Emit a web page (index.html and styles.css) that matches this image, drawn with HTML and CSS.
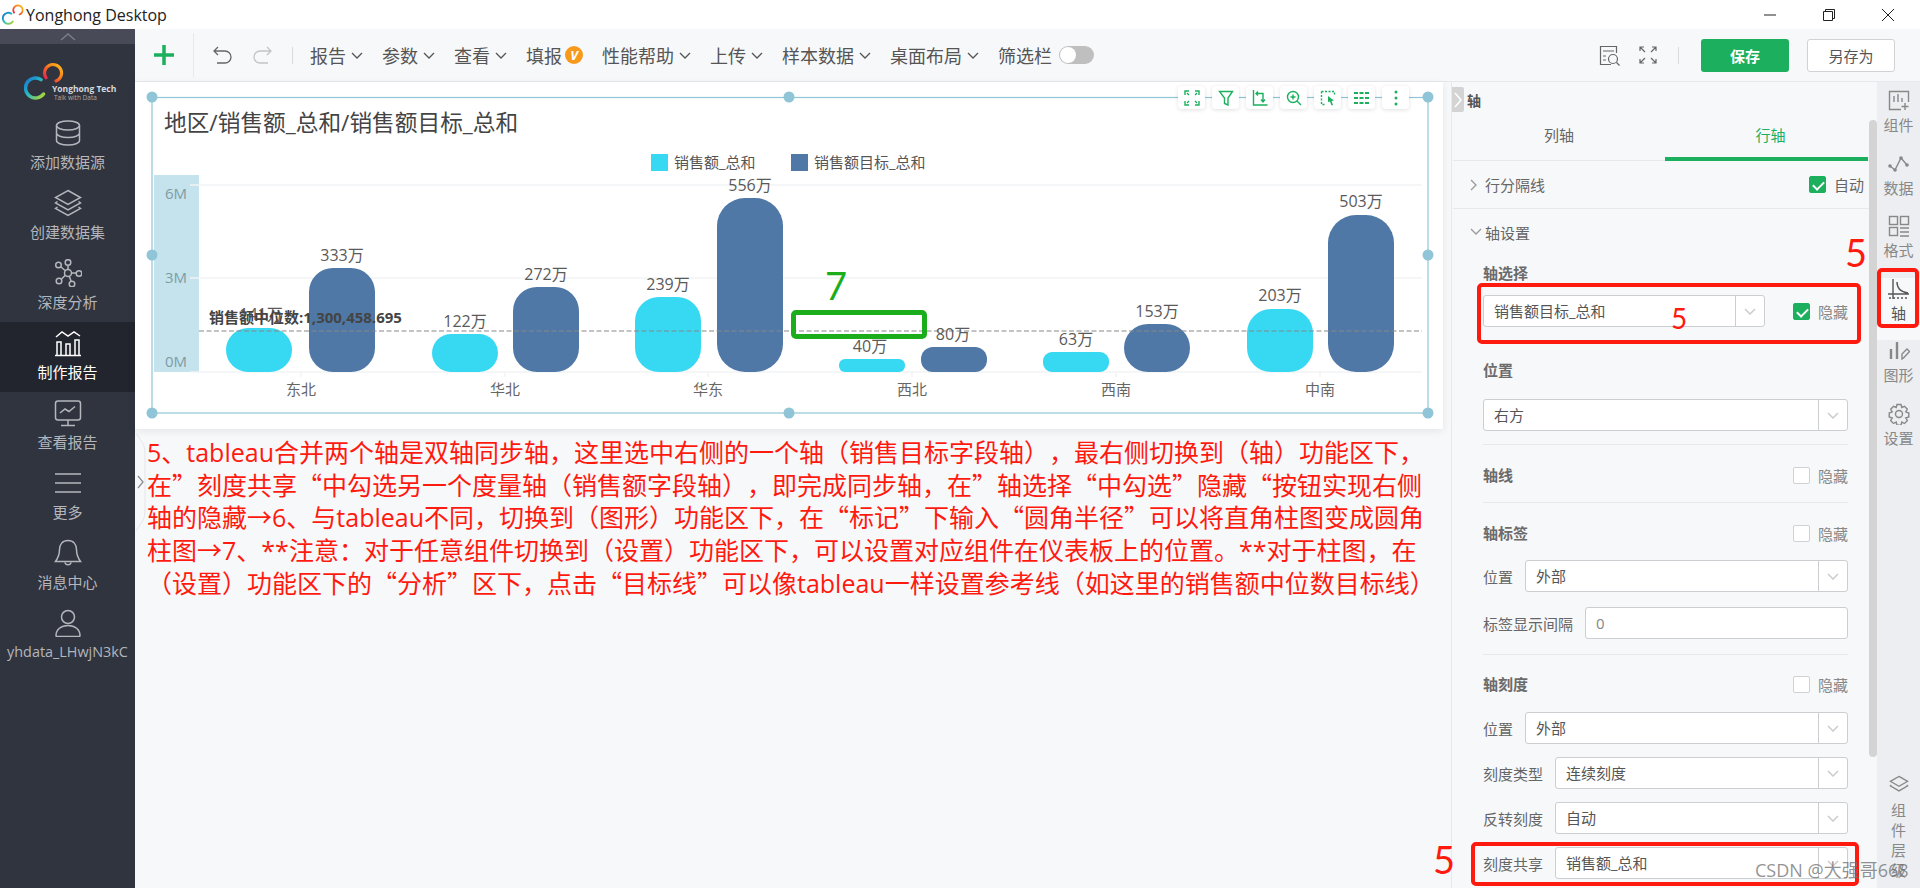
FILE: index.html
```html
<!DOCTYPE html>
<html lang="zh-CN">
  <head>
    <meta charset="UTF-8" />
    <title>Yonghong Desktop</title>
    <link rel="stylesheet" href="styles.css">
  </head>
  <body>
    <svg width="0" height="0" class="defs">
      <defs>
        <linearGradient id="ring-a" x1="0" y1="0" x2="1" y2="1">
          <stop offset="0" stop-color="#1c6fd0" />
          <stop offset="0.45" stop-color="#22b8c8" />
          <stop offset="1" stop-color="#b7d82c" />
        </linearGradient>
        <linearGradient id="ring-b" x1="1" y1="0" x2="0" y2="1">
          <stop offset="0" stop-color="#ffc21a" />
          <stop offset="0.5" stop-color="#f7701e" />
          <stop offset="1" stop-color="#e0145f" />
        </linearGradient>
        <symbol id="logo-mark" viewBox="0 0 40 40">
          <path d="M19.5 32A10 10 0 1 1 17 17.6" fill="none" stroke="url(#ring-a)" stroke-width="3.5" stroke-linecap="round" />
          <path d="M22 15.8A8.5 8.5 0 1 1 32 19" fill="none" stroke="url(#ring-b)" stroke-width="3.2" stroke-linecap="round" />
        </symbol>
      </defs>
    </svg>

    <header class="titlebar">
      <svg class="title-logo" width="22" height="22"><use href="#logo-mark" /></svg>
      <span class="title-text">Yonghong Desktop</span>
      <div class="win-controls">
        <span class="win-btn"><svg width="14" height="14" viewBox="0 0 14 14"><path d="M1 7h12" stroke="#222" fill="none" /></svg></span>
        <span class="win-btn"><svg width="14" height="14" viewBox="0 0 14 14"><path d="M1.5 3.500h9v9h-9zM3.500 3.500v-2h9v9h-2" stroke="#222" fill="none" /></svg></span>
        <span class="win-btn"><svg width="14" height="14" viewBox="0 0 14 14"><path d="M1 1l12 12M13 1L1 13" stroke="#222" fill="none" /></svg></span>
      </div>
    </header>

    <div class="app">
      <nav class="sidebar">
        <div class="side-collapse"><svg width="16" height="8" viewBox="0 0 16 8"><path d="M1 7l7-6 7 6" stroke="#7b7e88" stroke-width="1.5" fill="none" /></svg></div>
        <div class="side-logo">
          <svg width="40" height="40"><use href="#logo-mark" /></svg>
          <span class="brand">Yonghong Tech</span>
          <span class="slogan">Talk with Data</span>
        </div>
        <a class="side-item">
          <svg width="28" height="28" viewBox="0 0 28 28" class="ico"><ellipse cx="14" cy="6.500" rx="11.500" ry="4.500" /><path d="M2.500 6.500v15c0 2.500 5 4.500 11.500 4.500s11.500-2 11.500-4.500v-15M2.500 14c0 2.500 5 4.500 11.500 4.500s11.500-2 11.500-4.500" /></svg>
          <span>添加数据源</span>
        </a>
        <a class="side-item">
          <svg width="28" height="28" viewBox="0 0 28 28" class="ico"><path d="M14 1.500l12.500 7-12.500 7-12.500-7zM3.500 12.500l-2 1.500 12.500 7 12.500-7-2-1.500M3.500 18l-2 1.500 12.500 7 12.500-7-2-1.500" /></svg>
          <span>创建数据集</span>
        </a>
        <a class="side-item">
          <svg width="28" height="28" viewBox="0 0 28 28" class="ico"><circle cx="14" cy="14" r="3.500" /><circle cx="4.500" cy="6" r="2.800" /><circle cx="14" cy="3.500" r="2.800" /><circle cx="25" cy="14.500" r="2.800" /><circle cx="5" cy="22" r="2.800" /><circle cx="18" cy="25" r="2.800" /><path d="M6.700 7.800l4.700 4M14 6.300v4.200M17.500 14h4.700M7.300 20.300l4-4M15.300 17.300l1.800 5" /></svg>
          <span>深度分析</span>
        </a>
        <a class="side-item active">
          <svg width="28" height="28" viewBox="0 0 28 28" class="ico"><path d="M2 8l6-5 6 4 6-4 6 4" /><path d="M3 26V13h4v13M12 26V15h4v11M21 26V11h4v15M1 26.500h26" /></svg>
          <span>制作报告</span>
        </a>
        <a class="side-item">
          <svg width="28" height="28" viewBox="0 0 28 28" class="ico"><rect x="1.500" y="2" width="25" height="19" rx="2.500" /><path d="M6 14l5-4 4 2.500 6-5M14 21v5M7 26.500h14" /></svg>
          <span>查看报告</span>
        </a>
        <a class="side-item">
          <svg width="28" height="28" viewBox="0 0 28 28" class="ico"><path d="M1 5h26M1 14h26M1 23h26" /></svg>
          <span>更多</span>
        </a>
        <a class="side-item">
          <svg width="28" height="28" viewBox="0 0 28 28" class="ico"><path d="M14 1.500c-5.500 0-8.500 4-8.500 9 0 6-1.500 8.500-4 12h25c-2.500-3.500-4-6-4-12 0-5-3-9-8.500-9zM11 23.500c.5 3 5.500 3 6 0" /></svg>
          <span>消息中心</span>
        </a>
        <a class="side-item user">
          <svg width="28" height="28" viewBox="0 0 28 28" class="ico"><circle cx="14" cy="8" r="6.500" /><path d="M2 26.500c0-6 5-10 12-10s12 4 12 10c0 .5-.5 1-1 1H3c-.5 0-1-.5-1-1z" /></svg>
          <span>yhdata_LHwjN3kC</span>
        </a>
      </nav>

      <div class="workspace">
        <div class="toolbar">
          <span class="tb-plus"><svg width="22" height="22" viewBox="0 0 22 22"><path d="M11 1v20M1 11h20" stroke="#1cb05e" stroke-width="3.500" fill="none" /></svg></span>
          <span class="tb-sep tall"></span>
          <span class="tb-history">
            <svg width="20" height="18" viewBox="0 0 20 18"><path d="M5 1L1 5l4 4M1 5h11a6 6 0 0 1 0 12H4" stroke="#666" stroke-width="1.300" fill="none" /></svg>
            <svg width="20" height="18" viewBox="0 0 20 18"><path d="M15 1l4 4-4 4M19 5H8a6 6 0 0 0 0 12h8" stroke="#c4c4c4" stroke-width="1.300" fill="none" /></svg>
          </span>
          <span class="tb-sep"></span>
          <div class="tb-menu">
            <span class="menu-item">报告<svg class="chev" width="12" height="7" viewBox="0 0 12 7"><path d="M1 1l5 5 5-5" /></svg></span>
            <span class="menu-item">参数<svg class="chev" width="12" height="7" viewBox="0 0 12 7"><path d="M1 1l5 5 5-5" /></svg></span>
            <span class="menu-item">查看<svg class="chev" width="12" height="7" viewBox="0 0 12 7"><path d="M1 1l5 5 5-5" /></svg></span>
            <span class="menu-item">填报<span class="v-badge">V</span></span>
            <span class="menu-item">性能帮助<svg class="chev" width="12" height="7" viewBox="0 0 12 7"><path d="M1 1l5 5 5-5" /></svg></span>
            <span class="menu-item">上传<svg class="chev" width="12" height="7" viewBox="0 0 12 7"><path d="M1 1l5 5 5-5" /></svg></span>
            <span class="menu-item">样本数据<svg class="chev" width="12" height="7" viewBox="0 0 12 7"><path d="M1 1l5 5 5-5" /></svg></span>
            <span class="menu-item">桌面布局<svg class="chev" width="12" height="7" viewBox="0 0 12 7"><path d="M1 1l5 5 5-5" /></svg></span>
            <span class="menu-item">筛选栏<span class="toggle"></span></span>
          </div>
          <div class="tb-right">
            <svg width="21" height="21" viewBox="0 0 21 21" class="tb-ico"><path d="M12 19.500H1.500V1.500h16V8" /><path d="M4 6h11M4 11h3M4 15h3" /><circle cx="14" cy="14" r="4.500" /><path d="M17.500 17.500l3 3" /></svg>
            <svg width="18" height="18" viewBox="0 0 18 18" class="tb-ico"><path d="M1 5V1h4M1 1l5 5M13 1h4v4M17 1l-5 5M1 13v4h4M1 17l5-5M17 13v4h-4M17 17l-5-5" /></svg>
            <span class="tb-sep"></span>
            <button class="btn-save">保存</button>
            <button class="btn-saveas">另存为</button>
          </div>
        </div>

        <div class="content">
          <main class="canvas">
            <section class="chart-card">
              <svg class="chart" width="1308" height="347" viewBox="135 82 1308 347">
                <rect x="154" y="175" width="45" height="197" fill="#c5e3ec" />
                <g class="grid">
                  <path d="M190 185h1232M190 278h1232M190 372h1232" />
                  <path d="M301 372v5M505 372v5M708 372v5M912 372v5M1116 372v5M1320 372v5" />
                </g>
                <g class="axis-val" text-anchor="end">
                  <text x="187" y="199">6M</text>
                  <text x="187" y="283">3M</text>
                  <text x="187" y="367">0M</text>
                </g>

                <text class="chart-title" x="164" y="131">地区/销售额_总和/销售额目标_总和</text>
                <rect x="651" y="154" width="17" height="17" fill="#36d8f2" />
                <text class="legend" x="674" y="168">销售额_总和</text>
                <rect x="791" y="154" width="17" height="17" fill="#4f78a6" />
                <text class="legend" x="814" y="168">销售额目标_总和</text>

                <g fill="#36d8f2">
                  <rect x="226" y="328" width="66" height="44" rx="22" />
                  <rect x="432" y="334" width="66" height="38" rx="19" />
                  <rect x="635" y="297" width="66" height="75" rx="24" />
                  <rect x="839" y="359" width="66" height="13" rx="6" />
                  <rect x="1043" y="352" width="66" height="20" rx="9" />
                  <rect x="1247" y="309" width="66" height="63" rx="24" />
                </g>
                <g fill="#4f78a6">
                  <rect x="309" y="268" width="66" height="104" rx="24" />
                  <rect x="513" y="287" width="66" height="85" rx="24" />
                  <rect x="717" y="198" width="66" height="174" rx="28" />
                  <rect x="921" y="347" width="66" height="25" rx="12" />
                  <rect x="1124" y="324" width="66" height="48" rx="24" />
                  <rect x="1328" y="215" width="66" height="157" rx="28" />
                </g>

                <path class="median" d="M199 331h1223" />

                <g class="bar-val" text-anchor="middle">
                  <text x="261" y="320">141万</text>
                  <text x="342" y="261">333万</text>
                  <text x="465" y="327">122万</text>
                  <text x="546" y="280">272万</text>
                  <text x="668" y="290">239万</text>
                  <text x="750" y="191">556万</text>
                  <text x="870" y="352">40万</text>
                  <text x="953" y="340">80万</text>
                  <text x="1076" y="345">63万</text>
                  <text x="1157" y="317">153万</text>
                  <text x="1280" y="301">203万</text>
                  <text x="1361" y="207">503万</text>
                </g>
                <text class="median-val" x="209" y="323">销售额中位数:1,300,458.695</text>

                <g class="cat" text-anchor="middle">
                  <text x="301" y="395">东北</text>
                  <text x="505" y="395">华北</text>
                  <text x="708" y="395">华东</text>
                  <text x="912" y="395">西北</text>
                  <text x="1116" y="395">西南</text>
                  <text x="1320" y="395">中南</text>
                </g>

                <rect class="frame" x="152" y="97.500" width="1276" height="315.500" />
                <g fill="#8fc5d6">
                  <circle cx="152" cy="97" r="5.500" />
                  <circle cx="789" cy="97" r="5.500" />
                  <circle cx="1428" cy="97" r="5.500" />
                  <circle cx="152" cy="255" r="5.500" />
                  <circle cx="1428" cy="255" r="5.500" />
                  <circle cx="152" cy="413" r="5.500" />
                  <circle cx="789" cy="413" r="5.500" />
                  <circle cx="1428" cy="413" r="5.500" />
                </g>
              </svg>

              <div class="chart-tools">
                <span class="tool"><svg width="16" height="16" viewBox="0 0 16 16"><path d="M1 5V1h4M15 5V1h-4M1 11v4h4M15 11v4h-4M5 5L3 3M11 5l2-2M5 11l-2 2M11 11l2 2" /></svg></span>
                <span class="tool"><svg width="16" height="16" viewBox="0 0 16 16"><path d="M1.500 1.500h13L10 8v7l-3.500-1.500V8z" /></svg></span>
                <span class="tool"><svg width="16" height="16" viewBox="0 0 16 16"><path d="M1.500 0v15h14M4 3.500h7v8M9 9.500l2 2.500 2-2.500M6 1.500l-2 2 2 2" /></svg></span>
                <span class="tool"><svg width="16" height="16" viewBox="0 0 16 16"><circle cx="7" cy="7" r="5.500" /><path d="M11 11l4 4M4.500 7h5M7 4.500v5" /></svg></span>
                <span class="tool"><svg width="16" height="16" viewBox="0 0 16 16"><path d="M1.500 1.500h13v4M1.500 1.500v13h4" stroke-dasharray="2 1.500" /><path class="solid" d="M8 6l6 4.500-2.500.5 1.500 4-1.500.5-1.500-4L8 12z" /></svg></span>
                <span class="tool"><svg width="16" height="16" viewBox="0 0 16 16"><path d="M0 3h16M0 8h16M0 13h16" stroke-width="2" stroke-dasharray="4 1.500" /></svg></span>
                <span class="tool"><svg width="16" height="16" viewBox="0 0 16 16"><circle class="solid" cx="8" cy="2" r="1.500" /><circle class="solid" cx="8" cy="8" r="1.500" /><circle class="solid" cx="8" cy="14" r="1.500" /></svg></span>
              </div>
            </section>

            <svg class="canvas-tab" width="14" height="100" viewBox="0 0 14 100"><path d="M1 1c6 10 9 10 9 22v54c0 12-3 12-9 22" stroke="#e4e6ea" fill="none" /><path d="M3 44l5 6-5 6" stroke="#8a8d94" stroke-width="1.300" fill="none" /></svg>

            <p class="note"><span class="en">5</span>、<span class="en">tableau</span>合并两个轴是双轴同步轴，这里选中右侧的一个轴（销售目标字段轴），最右侧切换到（轴）功能区下，<br>在”刻度共享“中勾选另一个度量轴（销售额字段轴），即完成同步轴，在”轴选择“中勾选”隐藏“按钮实现右侧<br>轴的隐藏→<span class="en">6</span>、与<span class="en">tableau</span>不同，切换到（图形）功能区下，在“标记”下输入“圆角半径”可以将直角柱图变成圆角<br>柱图→<span class="en">7</span>、<span class="en">**</span>注意：对于任意组件切换到（设置）功能区下，可以设置对应组件在仪表板上的位置。<span class="en">**</span>对于柱图，在<br>（设置）功能区下的“分析”区下，点击“目标线”可以像<span class="en">tableau</span>一样设置参考线（如这里的销售额中位数目标线）</p>
          </main>

          <aside class="panel">
            <span class="panel-tab"><svg width="8" height="16" viewBox="0 0 8 16"><path d="M1 1l6 7-6 7" stroke="#fff" stroke-width="1.500" fill="none" /></svg></span>
            <div class="panel-head">轴</div>
            <div class="tabs">
              <span class="tab">列轴</span>
              <span class="tab on">行轴</span>
            </div>
            <div class="sec-row line">
              <svg class="sec-chev" width="8" height="12" viewBox="0 0 8 12"><path d="M1 1l5 5-5 5" /></svg>
              <span>行分隔线</span>
              <span class="chk-wrap"><i class="chk on"></i>自动</span>
            </div>
            <div class="sec-row">
              <svg class="sec-chev" width="12" height="8" viewBox="0 0 12 8"><path d="M1 1l5 5 5-5" /></svg>
              <span>轴设置</span>
            </div>

            <div class="group">
              <div class="fld-title">轴选择</div>
              <div class="axis-pick">
                <div class="select short"><span>销售额目标_总和</span><b><svg class="sel-chev" width="12" height="7" viewBox="0 0 12 7"><path d="M1 1l5 5 5-5" /></svg></b></div>
                <span class="chk-wrap dim"><i class="chk on"></i>隐藏</span>
              </div>

              <div class="fld-title pos">位置</div>
              <div class="select pos-sel"><span>右方</span><b><svg class="sel-chev" width="12" height="7" viewBox="0 0 12 7"><path d="M1 1l5 5 5-5" /></svg></b></div>
              <hr class="rule first">

              <div class="fld-head axis-line"><span class="fld-title">轴线</span><span class="chk-wrap dim"><i class="chk"></i>隐藏</span></div>
              <hr class="rule mid">

              <div class="fld-head axis-label"><span class="fld-title">轴标签</span><span class="chk-wrap dim"><i class="chk"></i>隐藏</span></div>
              <div class="fld a1"><label>位置</label><div class="select"><span>外部</span><b><svg class="sel-chev" width="12" height="7" viewBox="0 0 12 7"><path d="M1 1l5 5 5-5" /></svg></b></div></div>
              <div class="fld a2"><label>标签显示间隔</label><div class="select"><span class="num">0</span></div></div>
              <hr class="rule last">

              <div class="fld-head axis-tick"><span class="fld-title">轴刻度</span><span class="chk-wrap dim"><i class="chk"></i>隐藏</span></div>
              <div class="fld a3"><label>位置</label><div class="select"><span>外部</span><b><svg class="sel-chev" width="12" height="7" viewBox="0 0 12 7"><path d="M1 1l5 5 5-5" /></svg></b></div></div>
              <div class="fld a2b"><label>刻度类型</label><div class="select"><span>连续刻度</span><b><svg class="sel-chev" width="12" height="7" viewBox="0 0 12 7"><path d="M1 1l5 5 5-5" /></svg></b></div></div>
              <div class="fld a2b"><label>反转刻度</label><div class="select"><span>自动</span><b><svg class="sel-chev" width="12" height="7" viewBox="0 0 12 7"><path d="M1 1l5 5 5-5" /></svg></b></div></div>
              <div class="fld a2b"><label>刻度共享</label><div class="select"><span>销售额_总和</span><b><svg class="sel-chev" width="12" height="7" viewBox="0 0 12 7"><path d="M1 1l5 5 5-5" /></svg></b></div></div>
            </div>
          </aside>

          <div class="scroll"><i></i></div>

          <div class="rail">
            <a class="rail-item">
              <svg width="22" height="22" viewBox="0 0 22 22" class="rail-ico"><path d="M13 19.500H1.500V1.500h19V12" /><path d="M6 12V6M10 12V4M14 12V8M17 13v7M13.500 16.500h7" /></svg>
              <span>组件</span>
            </a>
            <a class="rail-item">
              <svg width="22" height="22" viewBox="0 0 22 22" class="rail-ico"><path d="M2 13l5 4 6-12 6 7" /><g class="fill-dots"><circle cx="2" cy="13" r="1.800" /><circle cx="7" cy="17" r="1.800" /><circle cx="13" cy="5" r="1.800" /><circle cx="19" cy="12" r="1.800" /></g></svg>
              <span>数据</span>
            </a>
            <a class="rail-item">
              <svg width="22" height="22" viewBox="0 0 22 22" class="rail-ico"><rect x="1.500" y="1.500" width="8" height="8" /><rect x="12.500" y="1.500" width="8" height="8" /><rect x="1.500" y="12.500" width="8" height="8" /><path d="M12 13h9M12 17h9M12 21h9" /></svg>
              <span>格式</span>
            </a>
            <a class="rail-item cur">
              <svg width="22" height="22" viewBox="0 0 22 22" class="rail-ico"><path d="M5 1v20M0 16h21M9 4c0 6 4 10 11 11" /><path d="M1 20h20" stroke-dasharray="2 2" /></svg>
              <span>轴</span>
            </a>
            <a class="rail-item">
              <svg width="22" height="22" viewBox="0 0 22 22" class="rail-ico"><path d="M3 9v10M9 2v17" stroke-width="2.400" /><path d="M14 19v-5l5-5 2.500 2.500-6 6.500z" /></svg>
              <span>图形</span>
            </a>
            <a class="rail-item">
              <svg width="22" height="22" viewBox="0 0 22 22" class="rail-ico"><path d="M9 1.500h4l.8 3 2.700-1.200 2.800 2.900-1.500 2.600 3 1.200v4l-3 1 1.500 2.700-2.800 2.800-2.700-1.400-.8 3h-4l-.8-3-2.700 1.400-2.800-2.800 1.500-2.700-3-1v-4l3-1.200-1.500-2.600 2.800-2.900 2.700 1.200z" /><circle cx="11" cy="11" r="3.500" /></svg>
              <span>设置</span>
            </a>
            <a class="rail-item layer">
              <svg width="20" height="20" viewBox="0 0 22 22" class="rail-ico"><path d="M11 1.500l9.500 5.500-9.500 5.500L1.500 7zM2.500 11L1.500 12l9.500 5.500 9.500-5.500-1-1" /></svg>
              <span>组件层级</span>
            </a>
          </div>
        </div>
      </div>
    </div>

    <!-- hand-drawn callouts on top of the app -->
    <div class="mark box-select"></div>
    <div class="mark box-rail"></div>
    <div class="mark box-share"></div>
    <div class="mark box-green"></div>
    <span class="num-mark n1">5</span>
    <span class="num-mark n2">5</span>
    <span class="num-mark n3">5</span>
    <span class="num-mark n4">7</span>
    <span class="watermark">CSDN @大强哥668</span>
  </body>
</html>
```

FILE: styles.css
```css
* {
  box-sizing: border-box;
}
html,
body {
  margin: 0;
  height: 888px;
  overflow: hidden;
}
body {
  position: relative;
  display: flex;
  flex-direction: column;
  background: #fff;
  font-family: "Open Sans", "Noto Sans CJK SC", sans-serif;
  color: #555;
  text-spacing-trim: space-all;
}
.defs {
  position: absolute;
}

/* window title */
.titlebar {
  height: 29px;
  flex: none;
  display: flex;
  align-items: center;
  padding-left: 2px;
}
.title-text {
  margin-left: 2px;
  font-size: 16px;
  color: #222;
}
.win-controls {
  margin-left: auto;
  padding-right: 3px;
  display: flex;
}
.win-btn {
  width: 59px;
  display: flex;
  justify-content: center;
}

.app {
  flex: 1;
  display: flex;
  min-height: 0;
}

/* left nav */
.sidebar {
  width: 135px;
  flex: none;
  background: #30343f;
  display: flex;
  flex-direction: column;
}
.side-collapse {
  height: 15px;
  background: #484b57;
  display: flex;
  justify-content: center;
  align-items: center;
}
.side-logo {
  height: 68px;
  padding: 18px 0 0 24px;
  display: flex;
  flex-direction: column;
  color: #d8d9dc;
  line-height: 1;
}
.brand {
  margin: -17px 0 0 28px;
  font-size: 8.5px;
  font-weight: 700;
  white-space: nowrap;
}
.slogan {
  margin: 1px 0 0 30px;
  font-size: 6.5px;
  color: #a9abb2;
  white-space: nowrap;
}
.side-item {
  height: 70px;
  padding-top: 7px;
  display: flex;
  flex-direction: column;
  align-items: center;
  font-size: 15px;
  line-height: 20px;
  color: #b4b6bc;
  white-space: nowrap;
}
.side-item span {
  margin-top: 5px;
}
.side-item.user {
  font-size: 14.4px;
}
.side-item.active {
  background: #23252e;
  color: #fff;
}
.ico {
  fill: none;
  stroke: #b4b6bc;
  stroke-width: 1.5;
}
.active .ico {
  stroke: #fff;
}

.workspace {
  flex: 1;
  min-width: 0;
  display: flex;
  flex-direction: column;
}

/* top toolbar */
.toolbar {
  height: 53px;
  flex: none;
  background: #f7f8fa;
  border-bottom: 1px solid #e6e8ec;
  display: flex;
  align-items: center;
  font-size: 18px;
  color: #555;
}
.tb-plus {
  margin-left: 18px;
  display: flex;
}
.tb-sep {
  width: 1px;
  height: 17px;
  background: #d8dadd;
}
.tb-sep.tall {
  height: 44px;
  margin-left: 18px;
  background: #e8e9ec;
}
.tb-history {
  margin-left: 19px;
  display: flex;
  gap: 19px;
  margin-right: 20px;
}
.tb-menu {
  margin-left: 17px;
  display: flex;
  gap: 19px;
}
.menu-item {
  display: flex;
  align-items: center;
  gap: 5px;
  white-space: nowrap;
}
.chev {
  fill: none;
  stroke: #555;
  stroke-width: 1.3;
}
.v-badge {
  width: 18px;
  height: 18px;
  margin-left: -2px;
  border-radius: 50%;
  background: #f79a1b;
  color: #fff;
  font-size: 13px;
  font-weight: 700;
  font-style: italic;
  line-height: 18px;
  text-align: center;
}
.toggle {
  position: relative;
  width: 35px;
  height: 18px;
  margin-left: 2px;
  border-radius: 9px;
  background: #bfbfbf;
}
.toggle::after {
  content: "";
  position: absolute;
  left: 1px;
  top: 1px;
  width: 16px;
  height: 16px;
  border-radius: 50%;
  background: #fff;
}
.tb-right {
  margin-left: auto;
  padding-right: 25px;
  display: flex;
  align-items: center;
}
.tb-ico {
  fill: none;
  stroke: #666;
  stroke-width: 1.2;
  margin-right: 19px;
}
.tb-right .tb-sep {
  margin-left: 2px;
  margin-right: 22px;
}
.btn-save,
.btn-saveas {
  width: 88px;
  height: 33px;
  border-radius: 3px;
  font-family: inherit;
  font-size: 15px;
  padding: 0;
}
.btn-save {
  border: none;
  background: #1cb05e;
  color: #fff;
  font-weight: 700;
  margin-right: 18px;
}
.btn-saveas {
  border: 1px solid #d0d2d6;
  background: #fff;
  color: #555;
}

.content {
  flex: 1;
  display: flex;
  min-height: 0;
}

/* report canvas */
.canvas {
  position: relative;
  width: 1316px;
  flex: none;
  background: #f7f8fa;
}
.chart-card {
  position: relative;
  width: 1308px;
  height: 347px;
  background: #fff;
  box-shadow: 0 2px 8px rgba(0, 0, 0, 0.08);
}
.chart {
  display: block;
}
.chart text {
  font-family: "Open Sans", "Noto Sans CJK SC", sans-serif;
}
.grid path {
  stroke: #f2f3f5;
  stroke-width: 1.5;
  fill: none;
}
.axis-val {
  font-size: 15px;
  fill: #7e9ca6;
}
.chart .chart-title {
  font-size: 22.7px;
  fill: #444;
}
.legend {
  font-size: 15px;
  fill: #555;
}
.bar-val {
  font-size: 16px;
  fill: #5a5a5a;
}
.median {
  stroke: #888;
  stroke-width: 1.2;
  stroke-dasharray: 5 2.5;
  fill: none;
}
.median-val {
  font-size: 15px;
  font-weight: 700;
  fill: #444;
}
.cat {
  font-size: 15px;
  fill: #666;
}
.frame {
  fill: none;
  stroke: #8fc5d6;
  stroke-width: 1.2;
}
.chart-tools {
  position: absolute;
  top: 4px;
  left: 1043px;
  display: flex;
  gap: 7px;
}
.tool {
  width: 27px;
  height: 23px;
  flex: none;
  display: flex;
  align-items: center;
  justify-content: center;
  background: #fff;
  border-radius: 4px;
  box-shadow: 0 1px 4px rgba(0, 0, 0, 0.12);
}
.tool svg {
  fill: none;
  stroke: #1cb05e;
  stroke-width: 1.4;
}
.tool .solid {
  fill: #1cb05e;
  stroke: none;
}
.canvas-tab {
  position: absolute;
  left: 0;
  top: 350px;
}
.note {
  margin: 0;
  padding: 6px 0 0 12px;
  font-family: "Noto Sans CJK SC", sans-serif;
  font-size: 25px;
  line-height: 32px;
  color: #ff1a0f;
  white-space: nowrap;
}
.note .en {
  font-family: "Open Sans", sans-serif;
}

/* property panel */
.panel {
  position: relative;
  width: 418px;
  flex: none;
  background: #f7f8fa;
  border-left: 1px solid #e6e8ec;
  font-size: 15px;
  color: #666;
}
.panel-tab {
  position: absolute;
  left: 0;
  top: 5px;
  width: 12px;
  height: 25px;
  background: #d4d4d4;
  display: flex;
  align-items: center;
  justify-content: center;
  border-radius: 0 2px 2px 0;
}
.panel-head {
  height: 31px;
  padding: 9px 0 0 15px;
  font-weight: 700;
  line-height: 20px;
  font-size: 14px;
  color: #555;
}
.tabs {
  height: 48px;
  margin-left: 1px;
  display: flex;
  border-bottom: 1px solid #e6e8ec;
}
.tab {
  width: 212px;
  text-align: center;
  line-height: 44px;
}
.tab.on {
  width: 203px;
  color: #1cb05e;
  border-bottom: 4px solid #1cb05e;
  height: 48px;
  padding-left: 8px;
}
.sec-row {
  height: 46px;
  margin-left: 1px;
  display: flex;
  align-items: center;
  position: relative;
  padding-left: 32px;
}
.sec-row.line {
  height: 48px;
  border-bottom: 1px solid #e6e8ec;
}
.sec-chev {
  position: absolute;
  left: 17px;
  fill: none;
  stroke: #999;
  stroke-width: 1.3;
}
.sec-row .chk-wrap {
  margin-left: auto;
  padding-right: 5px;
}
.chk-wrap {
  display: flex;
  align-items: center;
  gap: 8px;
  white-space: nowrap;
}
.chk-wrap.dim {
  color: #888;
}
.chk {
  position: relative;
  width: 17px;
  height: 17px;
  background: #fff;
  border: 1px solid #d0d2d6;
  border-radius: 2px;
}
.chk.on {
  background: #1cb05e;
  border-color: #1cb05e;
}
.chk.on::after {
  content: "";
  position: absolute;
  left: 5px;
  top: 2px;
  width: 5px;
  height: 9px;
  border: solid #fff;
  border-width: 0 2px 2px 0;
  transform: rotate(45deg);
}

.group {
  padding: 7px 21px 0 31px;
}
.fld-title {
  display: block;
  font-weight: 700;
  line-height: 22px;
  color: #6b6b6b;
}
.axis-pick {
  margin-top: 11px;
  display: flex;
  align-items: center;
  justify-content: space-between;
}
.select {
  flex: 1;
  height: 32px;
  display: flex;
  background: #fff;
  border: 1px solid #ccced2;
  border-radius: 3px;
  overflow: hidden;
  color: #555;
  line-height: 30px;
}
.select span {
  flex: 1;
  padding-left: 10px;
  white-space: nowrap;
}
.select b {
  width: 29px;
  flex: none;
  border-left: 1px solid #ccced2;
  display: flex;
  align-items: center;
  justify-content: center;
}
.select .num {
  color: #888;
}
.select.short {
  flex: none;
  width: 282px;
}
.sel-chev {
  fill: none;
  stroke: #ccc;
  stroke-width: 1.5;
}
.fld-title.pos {
  margin-top: 32px;
}
.pos-sel {
  margin-top: 18px;
}
.rule {
  margin: 0;
  border: 0;
  border-top: 1px solid #e6e8ec;
}
.rule.first {
  margin-top: 13px;
}
.rule.mid {
  margin-top: 16px;
}
.rule.last {
  margin-top: 15px;
}
.fld-head {
  display: flex;
  align-items: center;
  justify-content: space-between;
}
.axis-line {
  margin-top: 19px;
}
.axis-label {
  margin-top: 19px;
}
.axis-tick {
  margin-top: 18px;
}
.fld {
  display: flex;
  align-items: center;
  gap: 12px;
  white-space: nowrap;
}
.fld label {
  color: #666;
}
.a1 {
  margin-top: 16px;
}
.a2 {
  margin-top: 15px;
}
.a3 {
  margin-top: 17px;
}
.a2b {
  margin-top: 13px;
}

.scroll {
  width: 8px;
  flex: none;
  background: #f7f8fa;
  padding-top: 38px;
}
.scroll i {
  display: block;
  height: 637px;
  background: #d4d4d4;
  border-radius: 4px;
}

/* right rail */
.rail {
  flex: 1;
  background: #eceef1;
  display: flex;
  flex-direction: column;
  align-items: center;
  padding-top: 8px;
  font-size: 15px;
  color: #888;
}
.rail-item {
  width: 100%;
  height: 62.5px;
  display: flex;
  flex-direction: column;
  align-items: center;
  line-height: 22px;
}
.rail-item span {
  margin-top: 2px;
}
.rail-item.cur {
  background: #f7f8fa;
  color: #555;
}
.rail-ico {
  flex: none;
  fill: none;
  stroke: #888;
  stroke-width: 1.4;
}
.cur .rail-ico {
  stroke: #555;
}
.fill-dots circle {
  fill: #888;
  stroke: none;
}
.rail-item.layer {
  height: auto;
  margin-top: auto;
  padding-bottom: 8px;
  line-height: 20px;
}
.layer span {
  width: 15px;
  margin-top: 5px;
}

/* callouts */
.mark {
  position: absolute;
  border: 4px solid #ff1a0f;
  border-radius: 5px;
}
.box-select {
  left: 1477px;
  top: 283px;
  width: 384px;
  height: 61px;
}
.box-rail {
  left: 1877px;
  top: 268px;
  width: 42px;
  height: 60px;
}
.box-share {
  left: 1471px;
  top: 842px;
  width: 388px;
  height: 44px;
}
.box-green {
  left: 791px;
  top: 310px;
  width: 136px;
  height: 29px;
  border: 5px solid #1bad1b;
}
.num-mark {
  position: absolute;
  font-family: Lato, sans-serif;
  font-size: 38px;
  line-height: 38px;
  color: #ff1a0f;
}
.n1 {
  left: 1845px;
  top: 233px;
}
.n2 {
  left: 1671px;
  top: 304px;
  font-size: 28px;
  line-height: 28px;
}
.n3 {
  left: 1433px;
  top: 840px;
}
.n4 {
  left: 825px;
  top: 266px;
  color: #1bad1b;
}
.watermark {
  position: absolute;
  left: 1755px;
  top: 857px;
  font-size: 18px;
  line-height: 26px;
  color: rgba(110, 110, 110, 0.75);
  white-space: nowrap;
}
```
